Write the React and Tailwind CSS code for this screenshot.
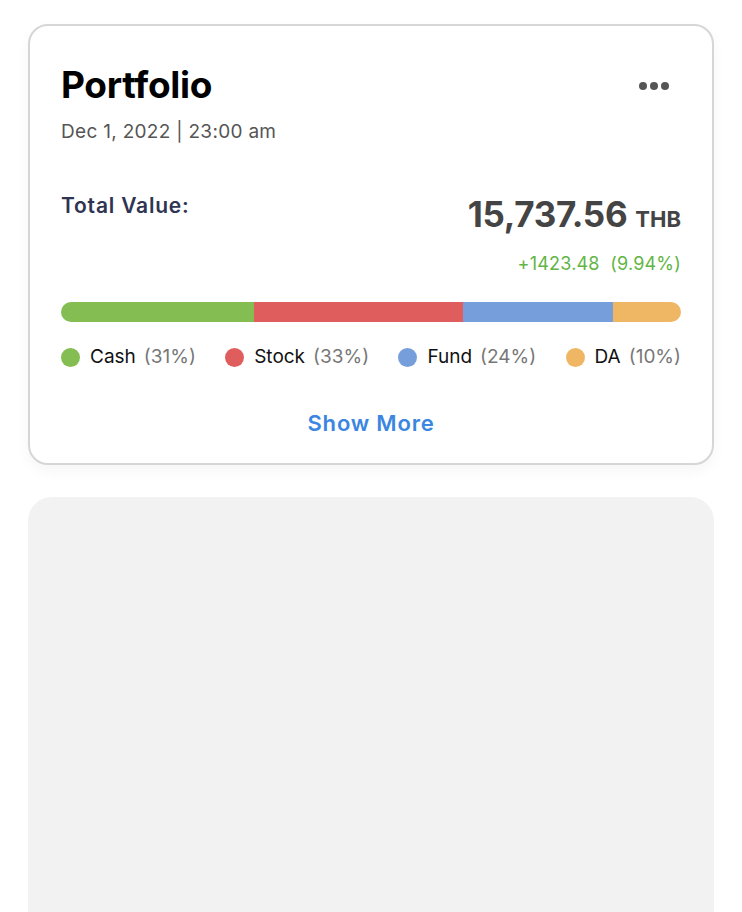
const segments = [
  { label: 'Cash', pct: '31%', width: 193, color: 'bg-[#84bd52]' },
  { label: 'Stock', pct: '33%', width: 210, color: 'bg-[#e05d5d]' },
  { label: 'Fund', pct: '24%', width: 150, color: 'bg-[#769edb]' },
  { label: 'DA', pct: '10%', width: 68, color: 'bg-[#efb764]' },
];

export default function App() {
  return (
    <div className="h-[912px] overflow-hidden bg-white px-[28px] pt-[24px] font-['Inter',sans-serif]">
      <div className="rounded-[20px] border-2 border-[#d6d6d6] bg-white px-[31px] pt-[39px] pb-[26px] shadow-[0_6px_14px_rgba(0,0,0,0.04)]">
        <div className="flex items-start justify-between">
          <div>
            <h1 className="text-[37px] leading-[40px] font-bold text-black tracking-[-0.3px]">Portfolio</h1>
            <p className="mt-[15px] text-[19px] leading-[24px] tracking-[0.3px] text-[#555]">Dec 1, 2022 | 23:00 am</p>
          </div>
          <button className="mt-[17px] mr-[12px] flex gap-[3px]">
            <span className="h-[8px] w-[8px] rounded-full bg-[#555]"></span>
            <span className="h-[8px] w-[8px] rounded-full bg-[#555]"></span>
            <span className="h-[8px] w-[8px] rounded-full bg-[#555]"></span>
          </button>
        </div>

        <div className="mt-[49px] flex items-start justify-between">
          <span className="text-[21px] leading-[26px] font-semibold tracking-[0.8px] text-[#2f3452]">Total Value:</span>
          <div className="flex flex-col items-end">
            <div className="flex items-baseline gap-[8px] text-[#444]">
              <span className="text-[35px] leading-[42px] font-bold tracking-[-0.3px]">15,737.56</span>
              <span className="text-[22px] font-bold">THB</span>
            </div>
            <span className="mt-[16px] text-[18px] leading-[24px] tracking-[0.2px] text-[#62b544]">+1423.48&nbsp;&nbsp;(9.94%)</span>
          </div>
        </div>

        <div className="mt-[26px] flex h-[20px] overflow-hidden rounded-full">
          {segments.map((s) => (
            <div key={s.label} className={`h-full ${s.color}`} style={{ width: s.width }}></div>
          ))}
        </div>

        <div className="mt-[23px] flex items-center justify-between">
          {segments.map((s) => (
            <div key={s.label} className="flex items-center text-[19px] leading-[24px]">
              <span className={`h-[19px] w-[19px] rounded-full ${s.color}`}></span>
              <span className="ml-[10px] text-[#111]">{s.label}</span>
              <span className="ml-[8px] text-[#777]">({s.pct})</span>
            </div>
          ))}
        </div>

        <div className="mt-[40px] text-center">
          <button className="text-[22px] leading-[28px] font-semibold tracking-[0.8px] text-[#3a86e0]">Show More</button>
        </div>
      </div>

      <div className="mt-[32px] h-[480px] rounded-[24px] bg-[#f2f2f2]"></div>
    </div>
  );
}
